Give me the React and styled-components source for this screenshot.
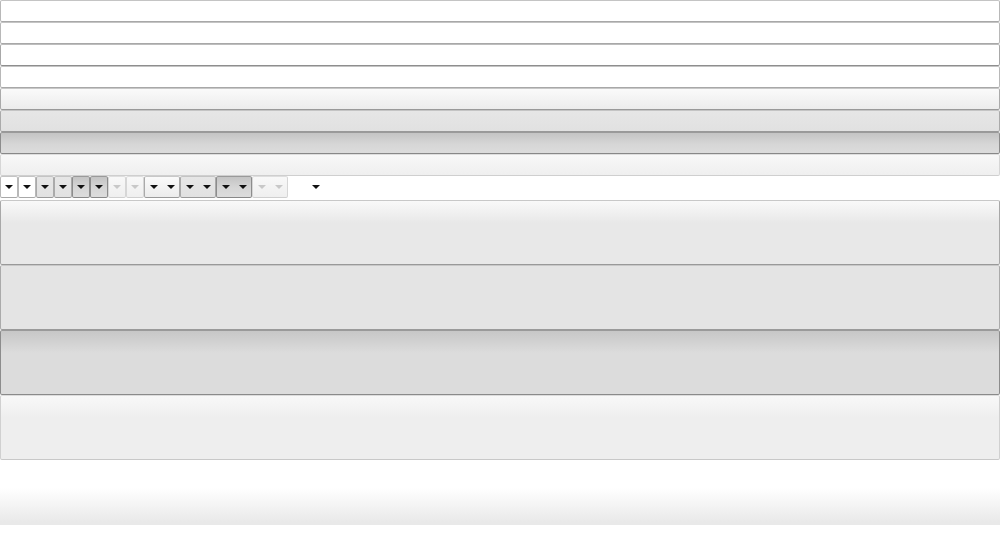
import React from 'react';
import styled, { createGlobalStyle, css } from 'styled-components';

const GlobalStyle = createGlobalStyle`
    html, body {
        margin: 0;
        padding: 0;
        background: #fff;
        font-family: "Liberation Sans", Arial, sans-serif;
    }
`;

const states = {
    plain: css`
        background: #fff;
        border-color: #c4c4c4 #b8b8b8 #a8a8a8;
    `,
    hover: css`
        background: #fff;
        border-color: #bdbdbd #a8a8a8 #8e8e8e;
    `,
    raised: css`
        background: linear-gradient(#fafafa, #ececec);
        border-color: #c8c8c8 #aaa #999;
    `,
    over: css`
        background: linear-gradient(#e6e6e6, #e1e1e1);
        border-color: #c4c4c4 #aaa #999;
    `,
    pressed: css`
        background: linear-gradient(#c4c4c4, #d6d6d6 55%, #dcdcdc);
        border-color: #9a9a9a #8c8c8c #888;
    `,
    disabled: css`
        background: linear-gradient(#f8f8f8, #efefef);
        border-color: #dedede #d6d6d6 #cfcfcf;
    `,
};

const bigStates = {
    raised: css`
        background: linear-gradient(#f9f9f9, #e8e8e8 22px, #e8e8e8);
        border-color: #c8c8c8 #a8a8a8 #999;
    `,
    over: css`
        background: #e4e4e4;
        border-color: #c8c8c8 #aaa #9a9a9a;
    `,
    pressed: css`
        background: linear-gradient(#c7c7c7, #dcdcdc 22px, #dcdcdc);
        border-color: #9a9a9a #8c8c8c #8a8a8a;
    `,
    disabled: css`
        background: linear-gradient(#f8f8f8, #eeeeee 22px, #eeeeee);
        border-color: #dcdcdc #d0d0d0 #c8c8c8;
    `,
};

const Page = styled.div`
    display: flex;
    flex-direction: column;
    width: 1000px;
`;

const Bar = styled.div`
    box-sizing: border-box;
    height: 22px;
    border: 1px solid;
    border-radius: 2px;
    ${p => states[p.$state]}
`;

const ArrowRow = styled.div`
    display: flex;
    height: 24px;
    align-items: flex-start;
`;

const Split = styled.div`
    box-sizing: border-box;
    width: ${p => p.$width}px;
    height: 22px;
    border: 1px solid;
    border-radius: 2px;
    display: flex;
    align-items: center;
    justify-content: space-around;
    ${p => states[p.$state]}
`;

const Arrow = styled.span`
    width: 0;
    height: 0;
    border-left: 4px solid transparent;
    border-right: 4px solid transparent;
    border-top: 4px solid ${p => (p.$faded ? '#c8c8c8' : '#111')};
`;

const Loose = styled.div`
    width: 56px;
    height: 22px;
    display: flex;
    align-items: center;
    justify-content: center;
`;

const Big = styled.div`
    box-sizing: border-box;
    height: 65px;
    border: 1px solid;
    border-radius: 2px;
    ${p => bigStates[p.$state]}
`;

const Fade = styled.div`
    height: 65px;
    background: linear-gradient(#fff, #fff 28px, #f6f6f6 42px, #e9e9e9 62px, #e9e9e9);
`;

const bars = ['plain', 'plain', 'hover', 'plain', 'raised', 'over', 'pressed', 'disabled'];
const smallPairs = ['plain', 'over', 'pressed', 'disabled'];
const wide = ['raised', 'over', 'pressed', 'disabled'];

const App = () => (
    <Page>
        <GlobalStyle />
        {bars.map((s, i) => (
            <Bar key={i} $state={s} />
        ))}
        <ArrowRow>
            {smallPairs.map(s => (
                <React.Fragment key={s}>
                    <Split $width={18} $state={s}>
                        <Arrow $faded={s === 'disabled'} />
                    </Split>
                    <Split $width={18} $state={s}>
                        <Arrow $faded={s === 'disabled'} />
                    </Split>
                </React.Fragment>
            ))}
            {wide.map(s => (
                <Split key={s} $width={36} $state={s}>
                    <Arrow $faded={s === 'disabled'} />
                    <Arrow $faded={s === 'disabled'} />
                </Split>
            ))}
            <Loose>
                <Arrow />
            </Loose>
        </ArrowRow>
        {['raised', 'over', 'pressed', 'disabled'].map(s => (
            <Big key={s} $state={s} />
        ))}
        <Fade />
    </Page>
);

export default App;
